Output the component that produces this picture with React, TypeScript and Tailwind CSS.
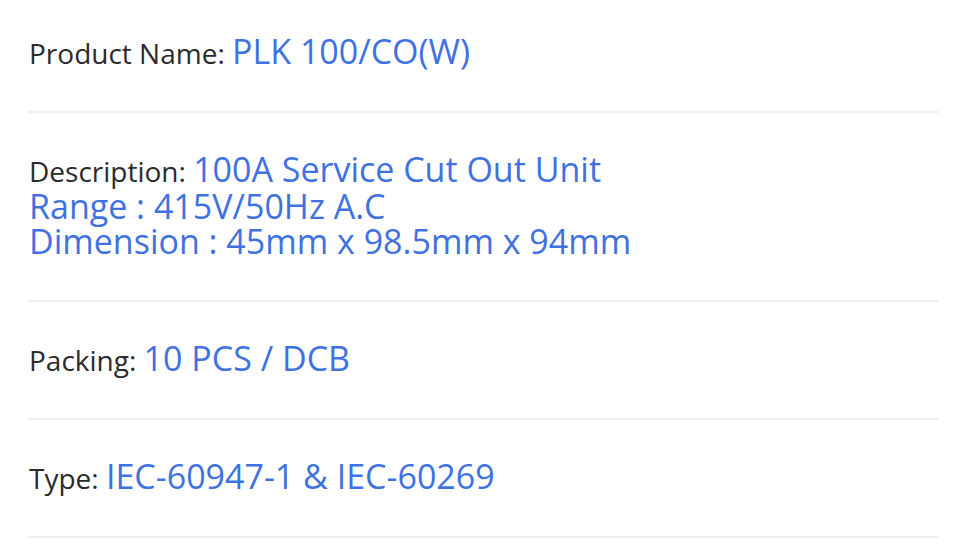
const rows: { label: string; lines: string[] }[] = [
  { label: "Product Name:", lines: ["PLK 100/CO(W)"] },
  {
    label: "Description:",
    lines: [
      "100A Service Cut Out Unit",
      "Range : 415V/50Hz A.C",
      "Dimension : 45mm x 98.5mm x 94mm",
    ],
  },
  { label: "Packing:", lines: ["10 PCS / DCB"] },
  { label: "Type:", lines: ["IEC-60947-1 & IEC-60269"] },
];

export default function App() {
  return (
    <div className="min-h-screen bg-white px-[28px] font-['Open_Sans',sans-serif]">
      <div className="w-[911px]">
        {rows.map((row, i) => (
          <div
            key={row.label}
            className={`border-b-2 border-[#eeeeee] text-[34px] leading-[35px] ${
              i === 0 ? "pt-[34px]" : "pt-[39px]"
            } ${row.lines.length > 1 ? "pb-[41px]" : "pb-[40px]"}`}
          >
            <p className="pl-px">
              <span className="text-[28px] text-[#2b2b2b]">{row.label} </span>
              {row.lines.map((line, j) => (
                <span key={j} className="text-[#3f72e0]">
                  {j > 0 && <br />}
                  {line}
                </span>
              ))}
            </p>
          </div>
        ))}
      </div>
    </div>
  );
}
